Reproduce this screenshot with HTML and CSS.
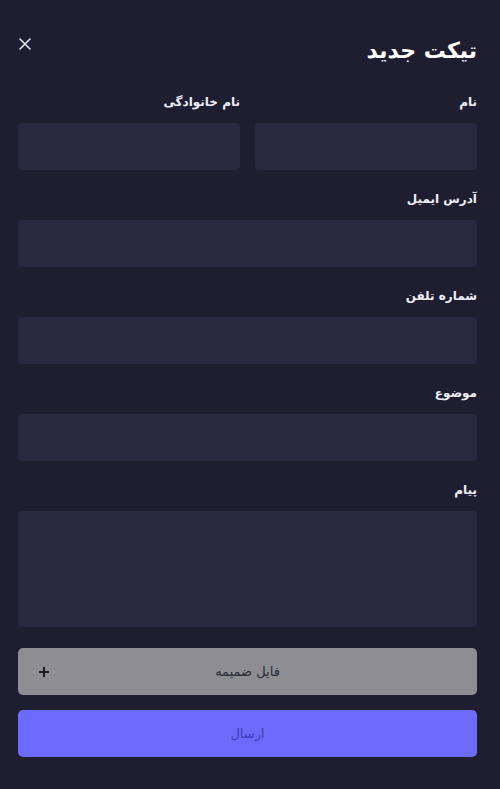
FILE: index.html
```html
<!DOCTYPE html>
<html lang="fa" dir="rtl">
<head>
<meta charset="utf-8">
<title>تیکت جدید</title>
<link rel="stylesheet" href="styles.css">
</head>
<body>
<div class="modal">
  <header class="head">
    <h1 class="title">تیکت جدید</h1>
    <button class="close" aria-label="close">
      <svg width="12" height="12" viewBox="0 0 12 12"><path d="M1 1L11 11M11 1L1 11" stroke="#e6e6ee" stroke-width="1.6" stroke-linecap="round"/></svg>
    </button>
  </header>
  <form class="form">
    <div class="row">
      <div class="field">
        <label class="label">نام</label>
        <div class="input"></div>
      </div>
      <div class="field">
        <label class="label">نام خانوادگی</label>
        <div class="input"></div>
      </div>
    </div>
    <div class="field">
      <label class="label">آدرس ایمیل</label>
      <div class="input"></div>
    </div>
    <div class="field">
      <label class="label">شماره تلفن</label>
      <div class="input"></div>
    </div>
    <div class="field">
      <label class="label">موضوع</label>
      <div class="input"></div>
    </div>
    <div class="field">
      <label class="label">پیام</label>
      <div class="input textarea"></div>
    </div>
    <div class="buttons">
      <div class="btn file">
        <span class="btn-text">فایل ضمیمه</span>
        <span class="plus">
          <svg width="12" height="12" viewBox="0 0 12 12"><path d="M6 1V11M1 6H11" stroke="#1c1c24" stroke-width="2"/></svg>
        </span>
      </div>
      <div class="btn send"><span class="btn-text">ارسال</span></div>
    </div>
  </form>
</div>
</body>
</html>
```

FILE: styles.css
```css
* { box-sizing: border-box; }
html, body {
  margin: 0;
  padding: 0;
  background: #1f1e31;
}
body {
  font-family: "DejaVu Sans", "Noto Sans", sans-serif;
  color: #ececf2;
}
.modal {
  width: 500px;
  height: 789px;
  padding: 35px 23px 0 18px;
  display: flex;
  flex-direction: column;
}
.head {
  display: flex;
  justify-content: space-between;
  align-items: flex-start;
  height: 32px;
}
.title {
  margin: 0;
  font-size: 22px;
  line-height: 32px;
  font-weight: bold;
  color: #ffffff;
}
.close {
  background: none;
  border: 0;
  padding: 0;
  margin-top: 3px;
  margin-left: 1px;
  width: 12px;
  height: 12px;
  display: flex;
}
.form {
  margin-top: 25px;
  display: flex;
  flex-direction: column;
  gap: 19px;
}
.row {
  display: grid;
  grid-template-columns: 1fr 1fr;
  gap: 15px;
}
.field {
  display: flex;
  flex-direction: column;
  gap: 11px;
}
.label {
  font-size: 12px;
  line-height: 20px;
  font-weight: bold;
  color: #eeeef6;
}
.input {
  height: 47px;
  background: #29283f;
  border-radius: 4px;
}
.textarea {
  height: 116px;
}
.buttons {
  margin-top: 2px;
  display: flex;
  flex-direction: column;
  gap: 15px;
}
.btn {
  height: 47px;
  border-radius: 5px;
  display: flex;
  align-items: center;
  justify-content: center;
  position: relative;
  font-size: 13px;
}
.file {
  background: #8e8e92;
  color: #2b2b33;
}
.plus {
  position: absolute;
  left: 20px;
  top: 18px;
  display: flex;
}
.send {
  background: #6c6bfb;
  color: #3f3db5;
}
.btn-text {
  line-height: 20px;
}
```
